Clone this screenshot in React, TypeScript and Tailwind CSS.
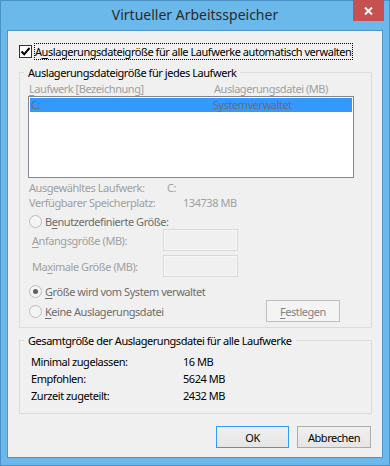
import type { ReactNode } from 'react';

const U = ({ children }: { children: ReactNode }) => (
  <span className="underline underline-offset-[2px]">{children}</span>
);

const Radio = ({ checked }: { checked?: boolean }) => (
  <span className="flex h-[13px] w-[13px] shrink-0 items-center justify-center rounded-full border border-[#bcbcbc] bg-[#f4f4f4]">
    {checked && <span className="h-[5px] w-[5px] rounded-full bg-[#5f5f5f]" />}
  </span>
);

const App = () => {
  return (
    <div className="h-[466px] w-[390px] border border-[#4a91c8] bg-[#6bb8ea] font-['Noto_Sans',sans-serif] text-[11px] leading-[15px] tracking-[-0.45px] text-black">
      {/* titelleiste */}
      <div className="relative h-[29px]">
        <div className="pt-[4px] text-center text-[14px] leading-[20px] tracking-[0px] text-[#2b2b2b]">Virtueller Arbeitsspeicher</div>
        <div className="absolute right-[5px] top-[-1px] flex h-[21px] w-[31px] items-center justify-center bg-[#c75050]">
          <svg width="9" height="8" viewBox="0 0 9 8">
            <path d="M1 0.5 L8 7.5 M8 0.5 L1 7.5" stroke="#fff" strokeWidth="2" />
          </svg>
        </div>
      </div>

      <div className="mx-[6px] h-[428px] border border-[#4d95cf] bg-[#f0f0f0] pt-[13px]">
        {/* checkbox */}
        <div className="flex h-[15px] items-center pl-[11px]">
          <span className="flex h-[13px] w-[13px] items-center justify-center border border-[#333] bg-white">
            <svg width="11" height="11" viewBox="0 0 11 11">
              <path d="M1.5 5.5 L4.2 8.3 L9.5 2" stroke="#000" strokeWidth="2" fill="none" />
            </svg>
          </span>
          <span className="ml-[2px] border border-dotted border-black pr-[1px]">
            A<U>u</U>slagerungsdateigröße für alle Laufwerke automatisch verwalten
          </span>
        </div>

        {/* gruppe 1 */}
        <fieldset className="ml-[11px] mr-[10px] mt-[6px] border border-[#dcdcdc] pb-[5px]">
          <legend className="ml-[4px] px-[4px] leading-[15px]">Auslagerungsdateigröße für jedes Laufwerk</legend>
          <div className="pl-[8px]">
            <div className="flex h-[16px] items-center pl-[1px] text-[#a0a0a0]">
              <span className="w-[185px]"><U>L</U>aufwerk [Bezeichnung]</span>
              <span>Auslagerungsdatei (MB)</span>
            </div>
            <div className="h-[82px] w-[326px] border border-[#828790] bg-white p-[1px]">
              <div className="flex h-[14px] items-center bg-[#3399ff] pl-[1px] leading-[14px] text-[#6d6d6d]">
                <span className="w-[182px]">C:</span>
                <span>Systemverwaltet</span>
              </div>
            </div>
            <div className="mt-[1px] flex h-[16px] items-center pl-[1px] text-[#a0a0a0]">
              <span className="w-[138px]">Ausgewähltes Laufwerk:</span>
              <span>C:</span>
            </div>
            <div className="flex h-[15px] items-center pl-[1px] text-[#a0a0a0]">
              <span className="w-[154px]">Verfügbarer Speicherplatz:</span>
              <span>134738 MB</span>
            </div>
            <div className="mt-[4px] flex h-[15px] items-center pl-[1px] text-[#6d6d6d]">
              <Radio />
              <span className="ml-[3px]">B<U>e</U>nutzerdefinierte Größe:</span>
            </div>
            <div className="flex h-[22px] items-center pl-[4px] text-[#a0a0a0]">
              <span className="w-[131px]"><U>A</U>nfangsgröße (MB):</span>
              <span className="h-[22px] w-[75px] border border-[#d9d9d9] bg-[#f0f0f0] shadow-[inset_0_0_0_1px_#f7f7f7]" />
            </div>
            <div className="mt-[4px] flex h-[22px] items-center pl-[4px] text-[#a0a0a0]">
              <span className="w-[131px]">Ma<U>x</U>imale Größe (MB):</span>
              <span className="h-[22px] w-[75px] border border-[#d9d9d9] bg-[#f0f0f0] shadow-[inset_0_0_0_1px_#f7f7f7]" />
            </div>
            <div className="mt-[6px] flex h-[16px] items-center pl-[1px] text-[#6d6d6d]">
              <Radio checked />
              <span className="ml-[3px]"><U>G</U>röße wird vom System verwaltet</span>
            </div>
            <div className="mt-[1px] flex h-[22px] items-center pl-[1px] text-[#6d6d6d]">
              <Radio />
              <span className="ml-[3px]"><U>K</U>eine Auslagerungsdatei</span>
              <button className="ml-auto mr-[31px] h-[22px] w-[74px] border border-[#bfbfbf] bg-[#f4f4f4] text-[#838383]">
                <U>F</U>estlegen
              </button>
            </div>
          </div>
        </fieldset>

        {/* gruppe 2 */}
        <fieldset className="ml-[11px] mr-[10px] mt-[5px] border border-[#dcdcdc] pb-[9px]">
          <legend className="ml-[4px] px-[4px] leading-[15px]">Gesamtgröße der Auslagerungsdatei für alle Laufwerke</legend>
          <div className="mt-[5px] pl-[11px]">
            <div className="flex h-[17px] items-center">
              <span className="w-[152px]">Minimal zugelassen:</span>
              <span>16 MB</span>
            </div>
            <div className="flex h-[17px] items-center">
              <span className="w-[152px]">Empfohlen:</span>
              <span>5624 MB</span>
            </div>
            <div className="flex h-[17px] items-center">
              <span className="w-[152px]">Zurzeit zugeteilt:</span>
              <span>2432 MB</span>
            </div>
          </div>
        </fieldset>

        {/* buttons */}
        <div className="mt-[12px] flex justify-end gap-[8px] pr-[11px]">
          <button className="h-[22px] w-[73px] border border-[#3399ff] bg-gradient-to-b from-[#f0f0f0] to-[#e5e5e5]">OK</button>
          <button className="h-[22px] w-[74px] border border-[#acacac] bg-gradient-to-b from-[#f0f0f0] to-[#e5e5e5]">Abbrechen</button>
        </div>
      </div>
    </div>
  );
};

export default App;
